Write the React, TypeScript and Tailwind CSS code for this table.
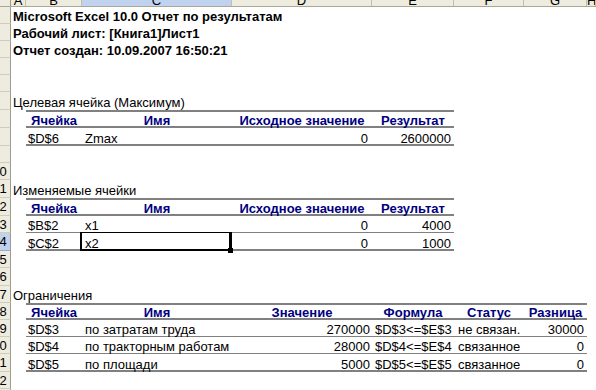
import React from 'react';

// row heights in px, rows 1..23 (Excel rounds 12.75pt to 17 or 18)
const ROW_H = [17, 17, 17, 17, 17, 18, 18, 18, 17, 17, 18, 18, 17, 18, 17, 18, 17, 17, 17, 17, 18, 17, 17];

const HEAD_COLS = [
  { label: 'A', w: 'w-[15px]' },
  { label: 'B', w: 'w-[56px]' },
  { label: 'C', w: 'w-[150px]', active: true },
  { label: 'D', w: 'w-[140px]' },
  { label: 'E', w: 'w-[82px]' },
  { label: 'F', w: 'w-[70px]' },
  { label: 'G', w: 'w-[63px]' },
  { label: 'H', w: 'flex-1' },
];

function ColumnHeader() {
  return (
    <div className="flex h-[7px] bg-[#EDECDF] border-b border-[#A9A796]">
      <div className="w-[11px] shrink-0 border-r border-[#9C9B8E]" />
      {HEAD_COLS.map((c) => (
        <div
          key={c.label}
          className={`${c.w} shrink-0 overflow-hidden border-r border-[#C3C0AE] text-center text-[13px] leading-[13px] ${
            c.active ? 'bg-[#C1D2EE]' : ''
          }`}
        >
          <div className="-mt-[6px]">{c.label}</div>
        </div>
      ))}
    </div>
  );
}

function Row({ n, children }: { n: number; children?: React.ReactNode }) {
  const h = ROW_H[n - 1];
  const active = n === 14;
  return (
    <div className="flex" style={{ height: h }}>
      <div
        className={`w-[11px] shrink-0 flex items-center overflow-hidden border-r border-b border-r-[#9C9B8E] text-[13px] leading-[13px] ${
          active ? 'bg-[#C1D2EE] border-b-[#98A8CE]' : 'bg-[#EDECDF] border-b-[#CFCCBC]'
        }`}
      >
        <span className="-ml-[0.5px]">{n >= 10 ? n % 10 : ''}</span>
      </div>
      <div className="flex flex-1 h-full">{children}</div>
    </div>
  );
}

function Cell({ w, className = '', children }: { w: string; className?: string; children?: React.ReactNode }) {
  return (
    <div className={`${w} shrink-0 h-full flex items-end pb-[1px] leading-[13px] whitespace-nowrap ${className}`}>
      {children}
    </div>
  );
}

const HEAD = 'shadow-[inset_0_2px_0_#808080,inset_0_-2px_0_#808080]';
const MID = 'shadow-[inset_0_-1px_0_#808080]';
const LAST = 'shadow-[inset_0_-2px_0_#808080]';
const TH = 'justify-center font-bold text-[#000080]';

function Label({ n, bold, text }: { n: number; bold?: boolean; text: string }) {
  return (
    <Row n={n}>
      <Cell w="w-auto" className={`pl-[2px] ${bold ? 'font-bold' : ''}`}>
        {text}
      </Cell>
    </Row>
  );
}

function ValueHeader({ n }: { n: number }) {
  return (
    <Row n={n}>
      <div className="w-[15px]" />
      <div className={`flex w-[428px] ${HEAD}`}>
        <Cell w="w-[56px]" className={TH}>Ячейка</Cell>
        <Cell w="w-[150px]" className={TH}>Имя</Cell>
        <Cell w="w-[140px]" className={TH}>Исходное значение</Cell>
        <Cell w="w-[82px]" className={TH}>Результат</Cell>
      </div>
    </Row>
  );
}

function ValueRow({
  n,
  cell,
  name,
  start,
  result,
  line,
  selected,
}: {
  n: number;
  cell: string;
  name: string;
  start: string;
  result: string;
  line: string;
  selected?: boolean;
}) {
  return (
    <Row n={n}>
      <div className="w-[15px]" />
      <div className={`flex w-[428px] ${line}`}>
        <Cell w="w-[56px]" className="pl-[2px]">{cell}</Cell>
        <Cell w="w-[150px]" className="pl-[3px] relative">
          {name}
          {selected && (
            <div className="absolute -left-[2px] -top-[1px] right-0 bottom-0 border-l-2 border-t border-r-[3px] border-b-2 border-black">
              <div className="absolute -right-[4px] -bottom-[4px] w-[5px] h-[5px] bg-black" />
            </div>
          )}
        </Cell>
        <Cell w="w-[140px]" className="justify-end pr-[4px]">{start}</Cell>
        <Cell w="w-[82px]" className="justify-end pr-[3px]">{result}</Cell>
      </div>
    </Row>
  );
}

const LIMITS = [
  { n: 19, cell: '$D$3', name: 'по затратам труда', value: '270000', formula: '$D$3<=$E$3', status: 'не связан.', diff: '30000', line: MID },
  { n: 20, cell: '$D$4', name: 'по тракторным работам', value: '28000', formula: '$D$4<=$E$4', status: 'связанное', diff: '0', line: MID },
  { n: 21, cell: '$D$5', name: 'по площади', value: '5000', formula: '$D$5<=$E$5', status: 'связанное', diff: '0', line: LAST },
];

export default function App() {
  return (
    <div className="w-[596px] h-[390px] overflow-hidden bg-white text-black text-[13px] font-['Liberation_Sans',Arial,sans-serif]">
      <ColumnHeader />

      <Label n={1} bold text="Microsoft Excel 10.0 Отчет по результатам" />
      <Label n={2} bold text="Рабочий лист: [Книга1]Лист1" />
      <Label n={3} bold text="Отчет создан: 10.09.2007 16:50:21" />
      <Row n={4} />
      <Row n={5} />
      <Label n={6} text="Целевая ячейка (Максимум)" />
      <ValueHeader n={7} />
      <ValueRow n={8} cell="$D$6" name="Zmax" start="0" result="2600000" line={LAST} />
      <Row n={9} />
      <Row n={10} />
      <Label n={11} text="Изменяемые ячейки" />
      <ValueHeader n={12} />
      <ValueRow n={13} cell="$B$2" name="x1" start="0" result="4000" line={MID} />
      <ValueRow n={14} cell="$C$2" name="x2" start="0" result="1000" line={LAST} selected />
      <Row n={15} />
      <Row n={16} />
      <Label n={17} text="Ограничения" />

      <Row n={18}>
        <div className="w-[15px]" />
        <div className={`flex w-[561px] ${HEAD}`}>
          <Cell w="w-[56px]" className={TH}>Ячейка</Cell>
          <Cell w="w-[150px]" className={TH}>Имя</Cell>
          <Cell w="w-[140px]" className={TH}>Значение</Cell>
          <Cell w="w-[82px]" className={TH}>Формула</Cell>
          <Cell w="w-[70px]" className={TH}>Статус</Cell>
          <Cell w="w-[63px]" className={TH}>Разница</Cell>
        </div>
      </Row>
      {LIMITS.map((r) => (
        <Row key={r.n} n={r.n}>
          <div className="w-[15px]" />
          <div className={`flex w-[561px] ${r.line}`}>
            <Cell w="w-[56px]" className="pl-[2px]">{r.cell}</Cell>
            <Cell w="w-[150px]" className="pl-[3px]">{r.name}</Cell>
            <Cell w="w-[140px]" className="justify-end pr-[2px]">{r.value}</Cell>
            <Cell w="w-[82px]" className="pl-[3px]">{r.formula}</Cell>
            <Cell w="w-[70px]" className="pl-[4px]">{r.status}</Cell>
            <Cell w="w-[63px]" className="justify-end pr-[3px]">{r.diff}</Cell>
          </div>
        </Row>
      ))}
      <Row n={22} />
      <Row n={23} />
    </div>
  );
}
